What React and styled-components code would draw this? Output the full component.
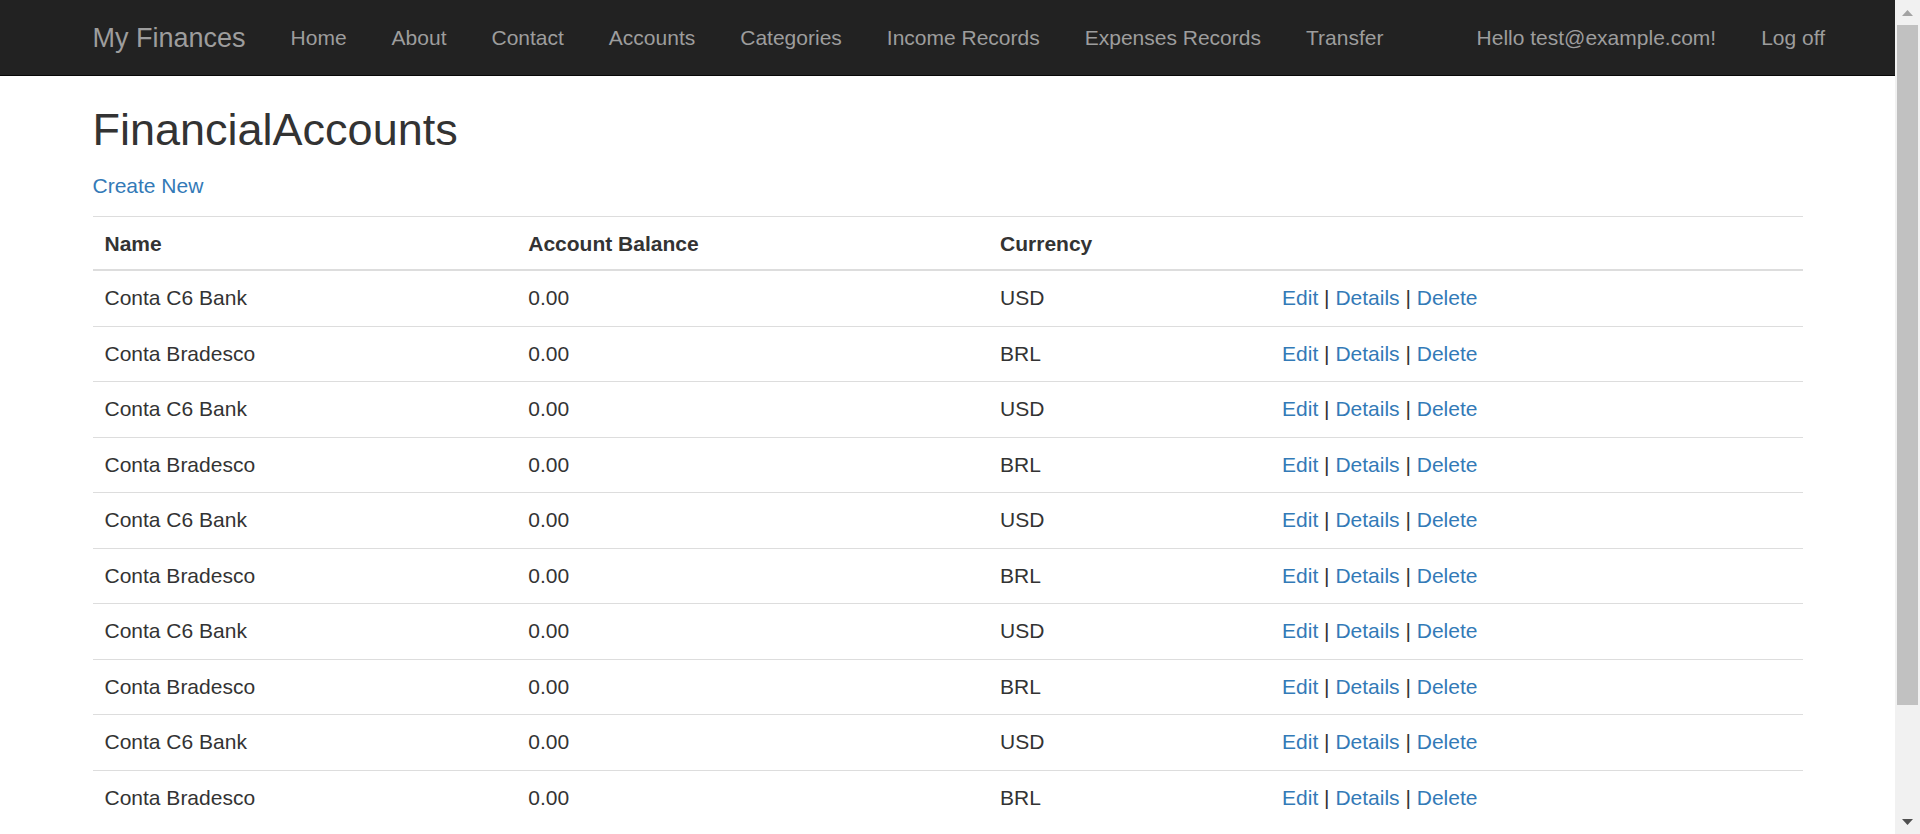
import React from "react";
import styled, { createGlobalStyle } from "styled-components";

const GlobalStyle = createGlobalStyle`
  body {
    margin: 0;
    font-family: "Liberation Sans", Arial, Helvetica, sans-serif;
    font-size: 21px;
    line-height: 30px;
    color: #333;
    background: #fff;
  }
`;

const Page = styled.div`
  margin-right: 25px;
`;

const Navbar = styled.nav`
  background: #222;
  border-bottom: 1.5px solid #080808;
  height: 75px;
  margin-bottom: -1.5px;
`;

const Container = styled.div`
  width: 1755px;
  margin: 0 auto;
  padding: 0 22.5px;
  box-sizing: border-box;
`;

const NavInner = styled(Container)`
  display: flex;
  align-items: center;
  height: 75px;
`;

const Brand = styled.a`
  font-size: 27px;
  line-height: 30px;
  padding: 22.5px;
  margin-left: -22.5px;
  color: #9d9d9d;
  text-decoration: none;
`;

const NavList = styled.ul`
  display: flex;
  list-style: none;
  margin: 0;
  padding: 0;

  ${props => props.right && "margin-left: auto; margin-right: -45px;"}
`;

const NavLink = styled.a`
  display: block;
  padding: 22.5px;
  line-height: 30px;
  color: #9d9d9d;
  text-decoration: none;
`;

const Title = styled.h2`
  font-size: 45px;
  font-weight: 500;
  line-height: 1.1;
  margin: 30px 0 16.5px;
`;

const Paragraph = styled.p`
  margin: 0 0 15px;
`;

const Link = styled.a`
  color: #337ab7;
  text-decoration: none;
`;

const Table = styled.table`
  width: 100%;
  border-collapse: collapse;
  border-spacing: 0;
  margin-bottom: 30px;
`;

const Th = styled.th`
  text-align: left;
  vertical-align: bottom;
  padding: 12px 12px 10.5px;
  line-height: 30px;
  border-top: 1px solid #ddd;
  border-bottom: 2px solid #ddd;
  font-weight: bold;
`;

const Td = styled.td`
  padding: 12px 12px 12.5px;
  line-height: 30px;
  border-top: 1px solid #ddd;
  vertical-align: top;
`;

const Footer = styled.footer`
  border-top: 1px solid #eee;
  margin-top: 30px;
  padding-top: 30px;
`;

/* window scrollbar, drawn because the headless shot hides the real one */
const Scrollbar = styled.div`
  position: fixed;
  top: 0;
  right: 0;
  bottom: 0;
  width: 25px;
  background: #f1f1f1;
  display: flex;
  flex-direction: column;
  align-items: center;
`;

const ScrollButton = styled.div`
  height: 25px;
  width: 25px;
  display: flex;
  align-items: center;
  justify-content: center;
  flex: none;
`;

const ScrollThumb = styled.div`
  width: 21px;
  height: 680px;
  background: #c1c1c1;
`;

const Spacer = styled.div`
  flex: 1;
`;

const accounts = Array.from({ length: 10 }, (_, i) =>
  i % 2 === 0
    ? { name: "Conta C6 Bank", balance: "0.00", currency: "USD" }
    : { name: "Conta Bradesco", balance: "0.00", currency: "BRL" }
);

const menu = [
  "Home",
  "About",
  "Contact",
  "Accounts",
  "Categories",
  "Income Records",
  "Expenses Records",
  "Transfer",
];

function App() {
  return (
    <>
      <GlobalStyle />
      <Page>
        <Navbar>
          <NavInner>
            <Brand href="#">My Finances</Brand>
            <NavList>
              {menu.map(item => (
                <li key={item}>
                  <NavLink href="#">{item}</NavLink>
                </li>
              ))}
            </NavList>
            <NavList right>
              <li>
                <NavLink href="#">Hello test@example.com!</NavLink>
              </li>
              <li>
                <NavLink href="#">Log off</NavLink>
              </li>
            </NavList>
          </NavInner>
        </Navbar>

        <Container>
          <Title>FinancialAccounts</Title>
          <Paragraph>
            <Link href="#">Create New</Link>
          </Paragraph>
          <Table>
            <thead>
              <tr>
                <Th>Name</Th>
                <Th>Account Balance</Th>
                <Th>Currency</Th>
                <Th />
              </tr>
            </thead>
            <tbody>
              {accounts.map((account, i) => (
                <tr key={i}>
                  <Td>{account.name}</Td>
                  <Td>{account.balance}</Td>
                  <Td>{account.currency}</Td>
                  <Td>
                    <Link href="#">Edit</Link> | <Link href="#">Details</Link>{" "}
                    | <Link href="#">Delete</Link>
                  </Td>
                </tr>
              ))}
            </tbody>
          </Table>
          <Footer>
            <Paragraph>&copy; 2024 - My Finances</Paragraph>
          </Footer>
        </Container>
      </Page>

      <Scrollbar>
        <ScrollButton>
          <svg width="11" height="6" viewBox="0 0 11 6">
            <polygon points="0,6 5.5,0 11,6" fill="#a3a3a3" />
          </svg>
        </ScrollButton>
        <ScrollThumb />
        <Spacer />
        <ScrollButton>
          <svg width="11" height="6" viewBox="0 0 11 6">
            <polygon points="0,0 11,0 5.5,6" fill="#505050" />
          </svg>
        </ScrollButton>
      </Scrollbar>
    </>
  );
}

export default App;
